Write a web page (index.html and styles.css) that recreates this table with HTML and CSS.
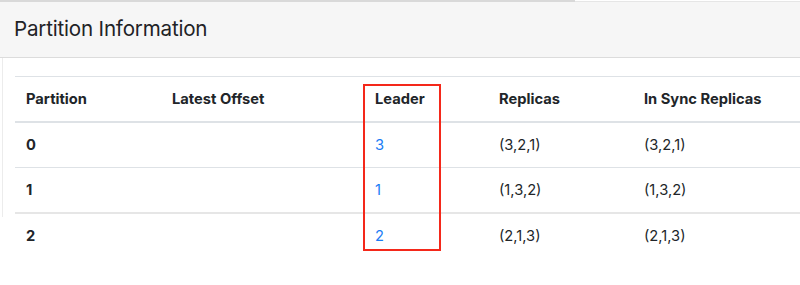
FILE: index.html
```html
<!DOCTYPE html>
<html>
<head>
<meta charset="utf-8">
<link rel="stylesheet" href="styles.css">
</head>
<body>
<div class="topline"></div>
<div class="card">
  <div class="card-header"><h5 class="title">Partition Information</h5></div>
  <div class="card-body">
    <div class="table-wrap">
      <table class="table">
        <colgroup>
          <col class="c1"><col class="c2"><col class="c3"><col class="c4"><col class="c5">
        </colgroup>
        <thead>
          <tr><th>Partition</th><th>Latest Offset</th><th>Leader</th><th>Replicas</th><th>In Sync Replicas</th></tr>
        </thead>
        <tbody>
          <tr><th>0</th><td></td><td><a href="#">3</a></td><td>(3,2,1)</td><td>(3,2,1)</td></tr>
          <tr><th>1</th><td></td><td><a href="#">1</a></td><td>(1,3,2)</td><td>(1,3,2)</td></tr>
          <tr class="thick"><th>2</th><td></td><td><a href="#">2</a></td><td>(2,1,3)</td><td>(2,1,3)</td></tr>
        </tbody>
      </table>
      <div class="highlight"></div>
    </div>
  </div>
</div>
</body>
</html>
```
FILE: styles.css
```css
* { box-sizing: border-box; }
html, body { margin: 0; padding: 0; background: #fff; }
body {
  font-family: Inter, "Noto Sans", "Liberation Sans", sans-serif;
  color: #212529;
  width: 800px;
  height: 285px;
  overflow: hidden;
  position: relative;
}
.topline {
  position: absolute;
  left: 0; top: 0;
  width: 575px; height: 2px;
  background: #d9d9d9;
}
.card {
  margin-left: 2px;
}
.card-header {
  margin-left: -3px;
  margin-top: 1px;
  height: 57px;
  background: #f6f6f6;
  border-top: 1px solid #e6e6e6;
  border-bottom: 1px solid #dcdcdc;
  display: flex;
  align-items: center;
  padding-left: 15px;
}
.title {
  margin: 0;
  font-size: 20.6px;
  font-weight: 400;
  letter-spacing: -0.2px;
  color: #1f2326;
  padding-bottom: 2px;
}
.card-body {
  padding: 18px 0 0 12px;
  border-left: 1px solid #ececec;
  margin-bottom: 67px;
}
.table-wrap { position: relative; height: 141px; }
.table {
  width: 785px;
  border-collapse: collapse;
  font-size: 14.7px;
  line-height: 22px;
}
.c1 { width: 146px; }
.c2 { width: 203px; }
.c3 { width: 124px; }
.c4 { width: 145px; }
.c5 { width: 167px; }
.table th, .table td {
  text-align: left;
  padding: 11px 11px;
  border-top: 1px solid #dee2e6;
  vertical-align: top;
}
.table th { font-weight: 700; }
.table td { font-weight: 400; }
.table thead th {
  border-bottom: 2px solid #dee2e6;
}
.table tbody tr:first-child th, .table tbody tr:first-child td { border-top: 0; }
.table tr.thick th, .table tr.thick td { border-top: 2px solid #e6e6e6; }
.table a { color: #1a7cf5; text-decoration: none; }
.highlight {
  position: absolute;
  left: 348px;
  top: 8px;
  width: 78px;
  height: 167px;
  border: 2px solid #f4281a;
}
```
